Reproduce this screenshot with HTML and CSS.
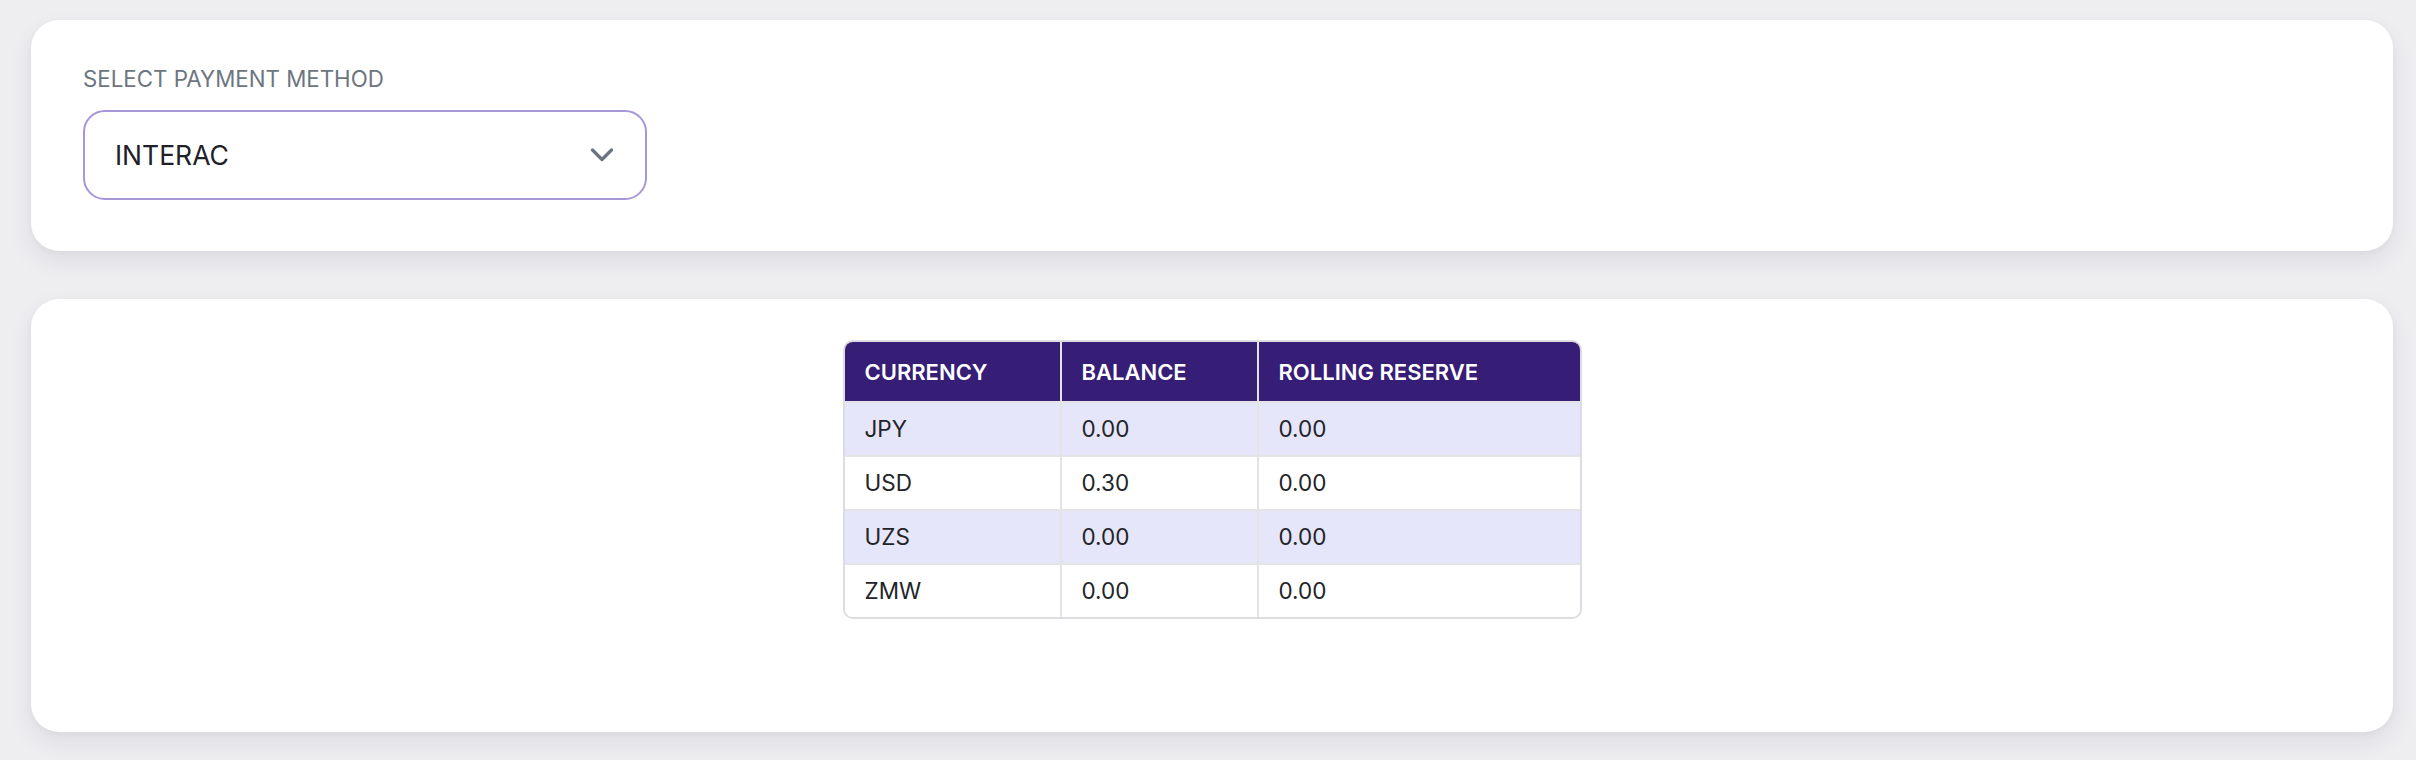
FILE: index.html
```html
<!DOCTYPE html>
<html lang="en">
<head>
<meta charset="utf-8">
<title>Balances</title>
<link rel="stylesheet" href="styles.css">
</head>
<body>
<main class="page">
  <section class="card card-select">
    <label class="field-label" for="method">SELECT PAYMENT METHOD</label>
    <div class="select" id="method">
      <span class="select-value">INTERAC</span>
      <svg class="chevron" width="24" height="14" viewBox="0 0 24 14" aria-hidden="true">
        <polyline points="2.5,2 12,11.5 21.5,2" fill="none" stroke="#6b7580" stroke-width="3.2" stroke-linecap="round" stroke-linejoin="round"/>
      </svg>
    </div>
  </section>
  <section class="card card-table">
    <div class="table-wrap">
      <table class="balances">
        <colgroup>
          <col class="c1"><col class="c2"><col class="c3">
        </colgroup>
        <thead>
          <tr><th>CURRENCY</th><th>BALANCE</th><th>ROLLING RESERVE</th></tr>
        </thead>
        <tbody>
          <tr><td>JPY</td><td>0.00</td><td>0.00</td></tr>
          <tr><td>USD</td><td>0.30</td><td>0.00</td></tr>
          <tr><td>UZS</td><td>0.00</td><td>0.00</td></tr>
          <tr><td>ZMW</td><td>0.00</td><td>0.00</td></tr>
        </tbody>
      </table>
    </div>
  </section>
</main>
</body>
</html>
```
FILE: styles.css
```css
* { box-sizing: border-box; }
html, body { margin: 0; padding: 0; }
body {
  background: #eeeef1;
  font-family: Inter, "Noto Sans", "Liberation Sans", sans-serif;
  color: #202329;
  height: 760px;
  overflow: hidden;
}
.page {
  padding: 20px 23px 0 31px;
  display: flex;
  flex-direction: column;
  gap: 48px;
}
.card {
  background: #ffffff;
  border-radius: 28px;
  box-shadow: 0 10px 24px rgba(30, 30, 60, 0.08), 0 2px 6px rgba(30, 30, 60, 0.04);
}
.card-select {
  padding: 45px 52px 51px;
  display: flex;
  flex-direction: column;
  align-items: flex-start;
}
.field-label {
  font-size: 22.3px;
  line-height: 28px;
  color: #6d7680;
  margin-bottom: 17px;
}
.select {
  width: 564px;
  height: 90px;
  border: 2px solid #a896db;
  border-radius: 22px;
  padding: 0 31px 0 30px;
  display: flex;
  align-items: center;
  justify-content: space-between;
}
.select-value {
  font-size: 26.5px;
  color: #1f2128;
}
.chevron { display: block; }
.card-table {
  padding: 41px 0 113px;
  display: flex;
  justify-content: center;
}
.table-wrap {
  width: 739px;
  border: 2px solid #dcdce2;
  border-radius: 10px;
  overflow: hidden;
}
.balances {
  width: 100%;
  border-collapse: separate;
  border-spacing: 0;
  table-layout: fixed;
  font-size: 22.5px;
  line-height: 28px;
}
.c1 { width: 215px; }
.c2 { width: 197px; }
.c3 { width: auto; }
.balances th {
  background: #361d75;
  color: #ffffff;
  font-weight: 600;
  font-size: 22px;
  text-align: left;
  padding: 15.5px 20px;
}
.balances td {
  padding: 12px 20px;
  color: #222428;
  border-top: 2px solid #e3e3e8;
}
.balances th + th,
.balances td + td {
  border-left: 2px solid #e3e3e8;
}
.balances tbody tr:nth-child(odd) td { background: #e6e6fa; }
.balances tbody tr:nth-child(even) td { background: #ffffff; }
```
